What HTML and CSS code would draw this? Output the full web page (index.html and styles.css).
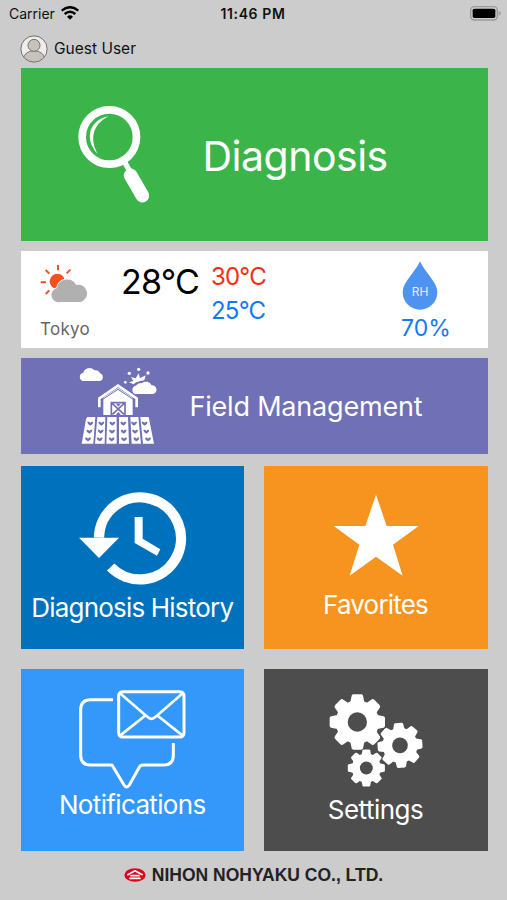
FILE: index.html
```html
<!DOCTYPE html>
<html lang="en">
<head>
<meta charset="utf-8">
<title>Home</title>
<link rel="stylesheet" href="styles.css">
</head>
<body>
<div class="status">
  <div class="carrier"><span>Carrier</span>
    <svg width="18" height="14" viewBox="0 0 54 42"><g fill="none" stroke="#000" stroke-width="7"><path d="M2 14Q27-7 52 14"/><path d="M11 24Q27 10 43 24"/></g><path d="M18 32Q27 24 36 32L27 41Z"/></svg>
  </div>
  <div class="time">11:46 PM</div>
  <svg class="battery" width="31" height="15" viewBox="0 0 93 45"><rect x="2" y="2" width="80" height="40" rx="11" fill="none" stroke="#999" stroke-width="4"/><rect x="8" y="8" width="68" height="28" rx="5"/><path d="M86 15q6 3 6 7t-6 7z" fill="#999"/></svg>
</div>
<header class="user">
  <svg width="28" height="28" viewBox="0 0 84 84"><clipPath id="face"><circle cx="42" cy="42" r="39"/></clipPath><circle cx="42" cy="42" r="39" fill="#eeedeb"/><g clip-path="url(#face)" fill="#c6c2bd" stroke="#77716b" stroke-width="3"><path d="M8 84V74Q14 48 42 47Q70 48 76 74V84Z"/><circle cx="42" cy="31" r="18"/></g><circle cx="42" cy="42" r="39.5" fill="none" stroke="#77716b" stroke-width="3"/></svg>
  <span>Guest User</span>
</header>
<main>
  <section class="tile diagnosis">
    <svg class="lens" width="73" height="99" viewBox="53 46 219 297"><g fill="none" stroke="#fff"><circle cx="147" cy="142" r="81.500" stroke-width="23"/><path d="M191 214L208 244" stroke-width="16"/><path d="M211 257L246 318" stroke-width="41" stroke-linecap="round"/></g><path d="M145 80C92 88 67 145 112 193C87 147 97 104 145 80Z" fill="#fff"/></svg>
    <span class="label">Diagnosis</span>
  </section>
  <section class="weather">
    <div class="place">
      <svg width="49" height="39" viewBox="60 42 147 117"><circle cx="112" cy="94" r="23" fill="#f4511e"/><path d="M114 45V61M77 60L88 71M151 59L140 70M62 97H78M77 132L88 121" stroke="#f4511e" stroke-width="6"/><path d="M121 156A20 20 0 0 1 111 114A31 31 0 0 1 169 105A25 25 0 1 1 181 156Z" fill="#b0b0b0" stroke="#fff" stroke-width="5" paint-order="stroke"/></svg>
      <span>Tokyo</span>
    </div>
    <div class="now">28°C</div>
    <div class="range"><span class="high">30°C</span><span class="low">25°C</span></div>
    <div class="humidity">
      <div class="drop"><svg width="36" height="49" viewBox="66 31 108 147"><path d="M120 32C137 69 172 94 172 125A52 52 0 0 1 68 125C68 94 103 69 120 32Z" fill="#4f93f1"/></svg><span>RH</span></div>
      <div class="percent">70%</div>
    </div>
  </section>
  <section class="tile field">
    <svg width="78" height="81" viewBox="25 28 234 243">
      <defs><g id="crop" fill="#6f70b5"><path d="M-9-5Q-3-7 0-2Q3-7 9-5Q8 4 0 6Q-8 4-9-5Z"/></g></defs>
      <g fill="#fff"><path d="M36 76A13 13 0 0 1 38 51A19 19 0 0 1 71 44A15 15 0 0 1 88 53A12 12 0 0 1 88 76ZM194 115A13 13 0 0 1 195 90A20 20 0 0 1 214 82A19 19 0 0 1 243 89A13 13 0 0 1 246 115Z"/>
      <path d="M188 86L175 80L188 76L181 64L195 68L204 53L208 68L225 59L221 74L209 76Q196 79 188 86Z"/><circle cx="164" cy="80" r="4"/><circle cx="176" cy="53" r="5"/><circle cx="204" cy="41" r="5"/><circle cx="232" cy="52" r="5"/>
      <path d="M98 178V126L142 97L186 126V178Z"/>
      <path d="M50 184H74L68 264H33L46 190ZM80 184H104L102 264H73ZM110 184H138V264H107ZM145 184H172L175 264H145ZM179 184H203L211 264H183ZM209 184H234L250 264H217Z"/></g>
      <path d="M86 155V128L142 90L198 128V155" fill="none" stroke="#fff" stroke-width="8"/>
      <path d="M95 155V132L142 101L189 132V155" fill="none" stroke="#6f70b5" stroke-width="3"/>
      <g fill="none" stroke="#6f70b5" stroke-width="5"><path d="M122 178V141H163V178M125 144L160 176M160 144L125 176"/></g><path d="M136 144H150L143 153ZM136 178H150L143 168Z" fill="#6f70b5"/>
      <use href="#crop" x="59" y="204"/><use href="#crop" x="92" y="204"/><use href="#crop" x="125" y="204"/><use href="#crop" x="158" y="204"/><use href="#crop" x="190" y="204"/><use href="#crop" x="222" y="204"/>
      <use href="#crop" x="56" y="228"/><use href="#crop" x="90" y="228"/><use href="#crop" x="124" y="228"/><use href="#crop" x="159" y="228"/><use href="#crop" x="193" y="228"/><use href="#crop" x="227" y="228"/>
      <use href="#crop" x="52" y="251"/><use href="#crop" x="87" y="251"/><use href="#crop" x="123" y="251"/><use href="#crop" x="160" y="251"/><use href="#crop" x="197" y="251"/><use href="#crop" x="232" y="251"/>
    </svg>
    <span class="label">Field Management</span>
  </section>
  <div class="grid">
    <section class="tile card history">
      <svg width="109" height="94" viewBox="175 79 327 282"><path d="M238 219A123 123 0 1 1 273 307" fill="none" stroke="#fff" stroke-width="31"/><path d="M178 219H298L238 280ZM345 157H369V222L422 254L412 273L345 235Z" fill="#fff"/></svg>
      <span class="label">Diagnosis History</span>
    </section>
    <section class="tile card favorites">
      <svg width="86" height="82" viewBox="218 87 258 246"><path d="M347 89L379 183H475L398 239L427 332L347 275L268 332L297 239L220 183H315Z" fill="#fff"/></svg>
      <span class="label">Favorites</span>
    </section>
    <section class="tile card notifications">
      <svg width="109" height="100" viewBox="174 71 327 300"><g fill="none" stroke="#fff" stroke-width="9" stroke-linejoin="round"><path d="M279 103H212Q182 103 182 133V270Q182 299 212 299H276L312 359Q320 371 328 359L357 307Q361 299 369 299H431Q460 299 460 270V233"/><rect x="296" y="79" width="196" height="136" rx="11"/><path d="M299 83L382 154Q394 167 407 154L489 83M374 152L300 211M414 152L488 211" stroke-width="8"/></g></svg>
      <span class="label">Notifications</span>
    </section>
    <section class="tile card settings">
      <svg width="94" height="93" viewBox="206 86 282 279"><defs><g id="gear"><g fill="#fff"><circle r="65"/><g id="teeth"><path d="M-21-60L-17-79Q-16-83-11-83H11Q16-83 17-79L21-60V60L17 79Q16 83 11 83H-11Q-16 83-17 79L-21 60Z"/><path transform="rotate(90)" d="M-21-60L-17-79Q-16-83-11-83H11Q16-83 17-79L21-60V60L17 79Q16 83 11 83H-11Q-16 83-17 79L-21 60Z"/></g><use href="#teeth" transform="rotate(45)"/></g><circle r="29" fill="#4d4d4d"/></g></defs><use href="#gear" transform="translate(291 170)"/><use href="#gear" transform="translate(419 240) rotate(-4) scale(.81)"/><use href="#gear" transform="translate(318 308) scale(.67)"/></svg>
      <span class="label">Settings</span>
    </section>
  </div>
</main>
<footer>
  <svg width="22" height="14" viewBox="44 40 66 42"><ellipse cx="77" cy="61" rx="32" ry="20.500" fill="#e1001a"/><path d="M54 61L77 48L100 61M63 63H91M60 71H94" fill="none" stroke="#fff" stroke-width="5"/></svg>
  <span>NIHON NOHYAKU CO., LTD.</span>
</footer>
</body>
</html>
```
FILE: styles.css
```css
* { box-sizing: border-box; }
body { margin: 0; width: 507px; height: 900px; overflow: hidden; background: #ccc; color: #111; font-family: Inter, sans-serif; }
svg { display: block; flex: none; }
span, .time, .now, .percent { white-space: nowrap; }
.status { height: 28px; display: grid; grid-template-columns: 1fr auto 1fr; padding: 0 6px 0 9px; align-items: center; font-size: 14px; line-height: 28px; }
.carrier { display: flex; align-items: center; gap: 6px; }
.carrier svg { margin-top: -2px; }
.time { font-weight: 600; font-size: 14px; letter-spacing: .6px; margin: 0 0 0 -4px; }
.battery { justify-self: end; margin-top: -1px; }
.user { height: 40px; display: flex; align-items: center; gap: 6px; padding: 1px 0 0 20px; font-size: 15.5px; }
main { padding: 0 19.5px 0 20.5px; }
.tile { color: #fff; display: flex; }
.label { font-weight: 400; }
.diagnosis { height: 173px; background: #3bb54a; padding: 37px 0 0 57px; }
.diagnosis .label { font-size: 41px; line-height: 50px; margin: 26px 0 0 52px; letter-spacing: -.5px; }
.weather { height: 97px; margin: 10px 0; background: #fff; display: flex; padding-left: 19.5px; }
.place { width: 81px; padding-top: 13px; color: #666; font-size: 17px; letter-spacing: .3px; }
.place span { display: block; line-height: 20px; margin-top: 16px; }
.now { width: 90px; font-size: 34px; line-height: 40px; padding-top: 11px; color: #000; letter-spacing: -.8px; }
.range { width: 190px; display: flex; flex-direction: column; font-size: 24px; line-height: 34px; padding-top: 9px; letter-spacing: -.8px; }
.high { color: #f52d12; }
.low, .percent { color: #1479f4; }
.humidity { padding-top: 10px; }
.drop { display: grid; width: 36px; margin-left: 1px; }
.drop > * { grid-area: 1 / 1; }
.drop span { color: #e3efff; font-size: 12px; line-height: 14px; margin-top: 24px; justify-self: center; }
.percent { font-size: 23px; line-height: 28px; margin-top: 4px; }
.field { height: 96px; background: #6f70b5; padding: 7px 0 0 58px; }
.field .label { font-size: 27px; line-height: 34px; margin: 25px 0 0 33px; letter-spacing: -.2px; }
.grid { display: grid; grid-template-columns: 223.5px 224px; grid-template-rows: 182.5px 182.5px; gap: 20px 19.5px; margin-top: 12px; }
.card { flex-direction: column; align-items: center; }
.card .label { font-size: 26px; line-height: 32px; letter-spacing: -.8px; }
.history { background: #0071bd; padding-top: 25px; }
.history .label { margin-top: 7px; }
.favorites { background: #f79420; padding-top: 28px; }
.favorites .label { margin-top: 13px; }
.notifications { background: #3498fb; padding-top: 20px; }
.notifications .label { margin-top: 0; letter-spacing: -.65px; }
.settings { background: #4d4d4d; padding-top: 25px; }
.settings .label { margin-top: 7px; letter-spacing: -.5px; }
footer { display: flex; justify-content: center; align-items: center; gap: 6px; height: 48px; font: 700 17.5px "Liberation Sans", sans-serif; color: #222; }
footer span { padding-top: 1px; }
```
